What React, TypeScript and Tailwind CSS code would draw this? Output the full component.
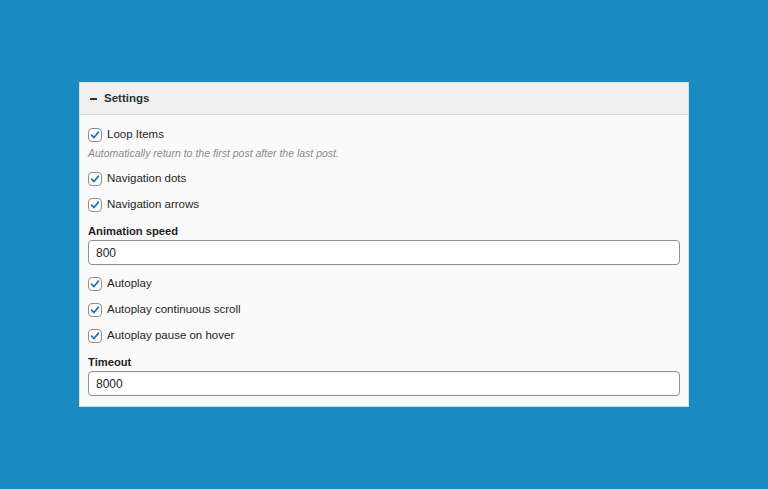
import React from "react";

function Check() {
  return (
    <span className="flex h-[14px] w-[14px] shrink-0 items-center justify-center rounded-[4px] border border-[#8c8f94] bg-white">
      <svg viewBox="0 0 14 14" className="h-[12px] w-[12px]">
        <path
          d="M3 7.2 L5.8 10 L11 3.6"
          fill="none"
          stroke="#2271b1"
          strokeWidth="2"
          strokeLinecap="round"
          strokeLinejoin="round"
        />
      </svg>
    </span>
  );
}

function CheckRow({ label, className = "" }: { label: string; className?: string }) {
  return (
    <label className={"flex h-[16px] items-center gap-[5px] " + className}>
      <Check />
      <span className="text-[11.5px] text-[#1e1e1e]">{label}</span>
    </label>
  );
}

function Field({ label, value, className = "" }: { label: string; value: string; className?: string }) {
  return (
    <div className={className}>
      <div className="h-[16px] text-[11.2px] font-bold leading-[16px] text-[#1e1e1e]">{label}</div>
      <div className="mt-[1px] flex h-[25px] items-center rounded-[4px] border border-[#8c8f94] bg-white px-[7px] text-[12px] text-[#1e1e1e]">
        {value}
      </div>
    </div>
  );
}

export default function App() {
  return (
    <div className="flex min-h-screen items-center justify-center bg-[#1b8bc3] font-['Liberation_Sans',Arial,sans-serif]">
      <section className="flex h-[325px] w-[610px] flex-col border border-[#dcdcde] bg-[#fafafa]">
        <header className="flex h-[32px] shrink-0 items-center gap-[7px] border-b border-[#dcdcde] bg-[#f0f0f0] pl-[10px]">
          <span className="mt-[1px] h-[2px] w-[7px] bg-[#2c3338]" />
          <h2 className="text-[11.5px] font-bold text-[#2c3338]">Settings</h2>
        </header>
        <div className="flex flex-col px-[8px] pt-[12px] pb-[12px]">
          <CheckRow label="Loop Items" />
          <p className="mt-[3px] h-[14px] text-[10.5px] italic leading-[14px] text-[#8a8a8a]">
            Automatically return to the first post after the last post.
          </p>
          <CheckRow label="Navigation dots" className="mt-[11px]" />
          <CheckRow label="Navigation arrows" className="mt-[10px]" />
          <Field label="Animation speed" value="800" className="mt-[10px]" />
          <CheckRow label="Autoplay" className="mt-[11px]" />
          <CheckRow label="Autoplay continuous scroll" className="mt-[10px]" />
          <CheckRow label="Autoplay pause on hover" className="mt-[10px]" />
          <Field label="Timeout" value="8000" className="mt-[10px]" />
        </div>
      </section>
    </div>
  );
}
